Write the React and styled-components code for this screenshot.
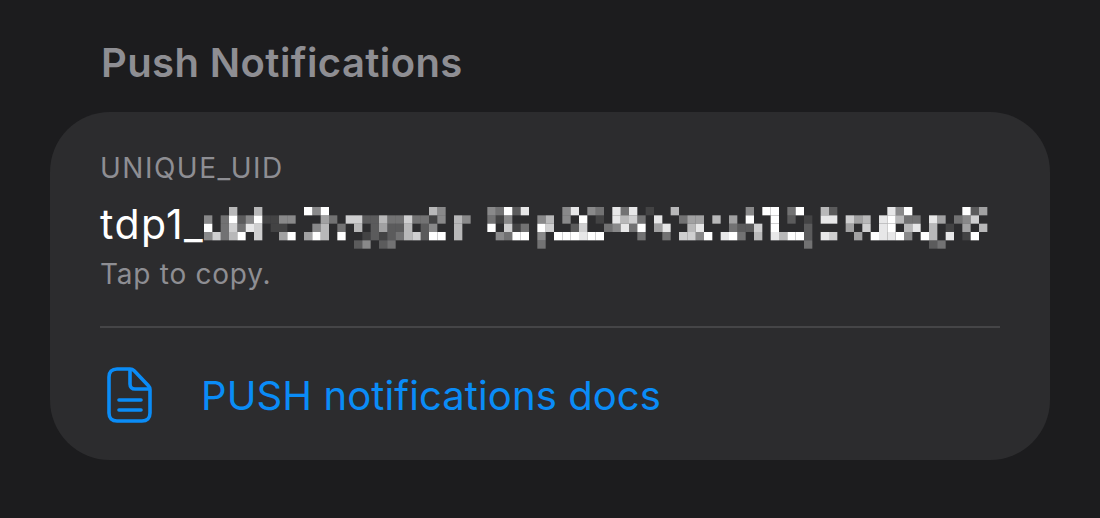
import React from 'react';
import styled, { createGlobalStyle } from 'styled-components';

const GlobalStyle = createGlobalStyle`
  html, body {
    margin: 0;
    padding: 0;
    background: #1c1c1e;
  }
  body {
    font-family: Inter, "Liberation Sans", sans-serif;
  }
`;

const Page = styled.div`
  width: 1100px;
  height: 518px;
  padding: 40px 50px 0;
  box-sizing: border-box;
  background: #1c1c1e;
  overflow: hidden;
`;

const SectionTitle = styled.h2`
  margin: 0 0 27px 51px;
  font-size: 40px;
  line-height: 45px;
  font-weight: 600;
  letter-spacing: 0.4px;
  color: #8e8e93;
`;

const Card = styled.section`
  height: 348px;
  border-radius: 60px;
  background: #2c2c2e;
  padding: 39px 50px 0;
  box-sizing: border-box;
`;

const Label = styled.div`
  font-size: 28px;
  line-height: 34px;
  letter-spacing: 1.5px;
  color: #8e8e93;
`;

const UidRow = styled.div`
  display: flex;
  align-items: flex-start;
  height: 56px;
  margin-top: 11px;
`;

const UidText = styled.span`
  font-size: 41px;
  line-height: 56px;
  letter-spacing: 1.4px;
  color: #fff;
`;

const Mosaic = styled.svg`
  display: block;
  flex: none;
  margin-top: 11px;
`;

const Hint = styled.div`
  margin-top: 5px;
  font-size: 28px;
  line-height: 34px;
  letter-spacing: 0.75px;
  color: #8e8e93;
`;

const Divider = styled.hr`
  margin: 35px 0 0;
  border: 0;
  height: 2px;
  background: #454547;
`;

const DocsLink = styled.a`
  display: flex;
  align-items: center;
  height: 132px;
  padding-top: 2px;
  box-sizing: border-box;
  color: #0a8cf7;
  font-size: 40px;
  letter-spacing: 0.1px;
  text-decoration: none;
`;

const DocIcon = styled.svg`
  flex: none;
  margin: 0 49px 0 6px;
`;

// col:level pairs for each row of the blurred part of the uid
const mosaicRows = [
  '3:6 6:6 12:9 13:4 14:9 27:6 28:4 34:4 35:3 36:9 37:2 38:8 43:4 44:8 46:4 47:3 49:8 50:3 51:8 53:1 56:6 65:4 67:9 68:9 70:3 71:9 74:6 75:2 82:8 83:4 84:9 91:9 92:2 93:5',
  '0:4 2:3 3:9 4:2 5:4 6:9 7:1 8:1 9:4 10:4 14:5 15:3 17:7 18:7 19:2 20:2 21:6 22:3 23:3 24:7 25:3 26:3 27:1 28:4 30:6 31:4 34:3 35:1 36:4 40:4 41:6 43:4 45:9 47:1 49:8 50:6 51:7 52:3 54:8 57:3 58:5 59:5 61:6 63:5 65:9 68:9 70:2 72:1 74:8 75:8 77:7 78:5 79:6 81:8 82:9 83:6 84:3 85:3 87:8 88:5 90:3 91:4 92:7',
  '0:9 2:3 3:7 4:3 5:8 6:7 8:1 9:1 13:4 14:6 16:3 18:6 20:2 21:5 22:2 23:2 24:6 26:2 27:4 30:6 34:9 36:7 37:1 38:3 40:9 41:7 44:2 45:7 48:3 49:4 50:8 51:3 52:9 54:5 55:8 58:6 59:8 63:3 64:2 65:2 66:7 68:9 72:2 77:5 79:7 81:8 82:9 84:6 85:8 87:6 89:1 91:5 93:6',
  '0:4 1:7 2:3 3:6 4:9 6:7 9:5 10:9 12:5 13:9 14:6 16:9 19:1 20:2 21:1 22:2 23:3 24:6 25:7 26:2 27:9 28:9 30:6 35:4 36:3 37:9 38:9 40:4 42:9 43:9 44:9 45:8 46:9 47:9 52:3 55:3 57:7 58:7 59:4 60:9 62:8 63:9 64:3 66:6 68:8 69:6 70:9 71:9 72:2 74:8 75:7 78:5 80:9 81:8 82:8 83:9 84:4 86:9 87:6 89:8 91:1 92:9',
  '18:2 19:4 21:2 22:3 40:3 72:3 87:2 88:3',
];

const CELL = 25 / 3;

const BlurredUid = () => (
  <Mosaic width="786" height="42" viewBox="0 0 786 42" aria-hidden="true">
    {mosaicRows.map((row, y) =>
      row.split(' ').map((cell) => {
        const [x, level] = cell.split(':').map(Number);
        return (
          <rect
            key={`${y}-${x}`}
            x={x * CELL}
            y={y * CELL}
            width={CELL}
            height={CELL}
            fill="#fff"
            opacity={level / 9}
          />
        );
      })
    )}
  </Mosaic>
);

const App = () => (
  <>
    <GlobalStyle />
    <Page>
      <SectionTitle>Push Notifications</SectionTitle>
      <Card>
        <Label>UNIQUE_UID</Label>
        <UidRow>
          <UidText>tdp1_</UidText>
          <BlurredUid />
        </UidRow>
        <Hint>Tap to copy.</Hint>
        <Divider />
        <DocsLink href="#">
          <DocIcon width="46" height="58" viewBox="0 0 46 58" fill="none" stroke="currentColor" strokeWidth="3.6" strokeLinecap="round" strokeLinejoin="round">
            <path d="M11 3h13c1.600 0 3 .6 4.200 1.800l14 14.600c1.200 1.200 1.800 2.600 1.800 4.200V47c0 5-3 8-8 8H11c-5 0-8-3-8-8V11c0-5 3-8 8-8z" />
            <path d="M24 4v14c0 3 2 5 5 5h14" />
            <path d="M13 34h22M13 44h22" />
          </DocIcon>
          PUSH notifications docs
        </DocsLink>
      </Card>
    </Page>
  </>
);

export default App;
